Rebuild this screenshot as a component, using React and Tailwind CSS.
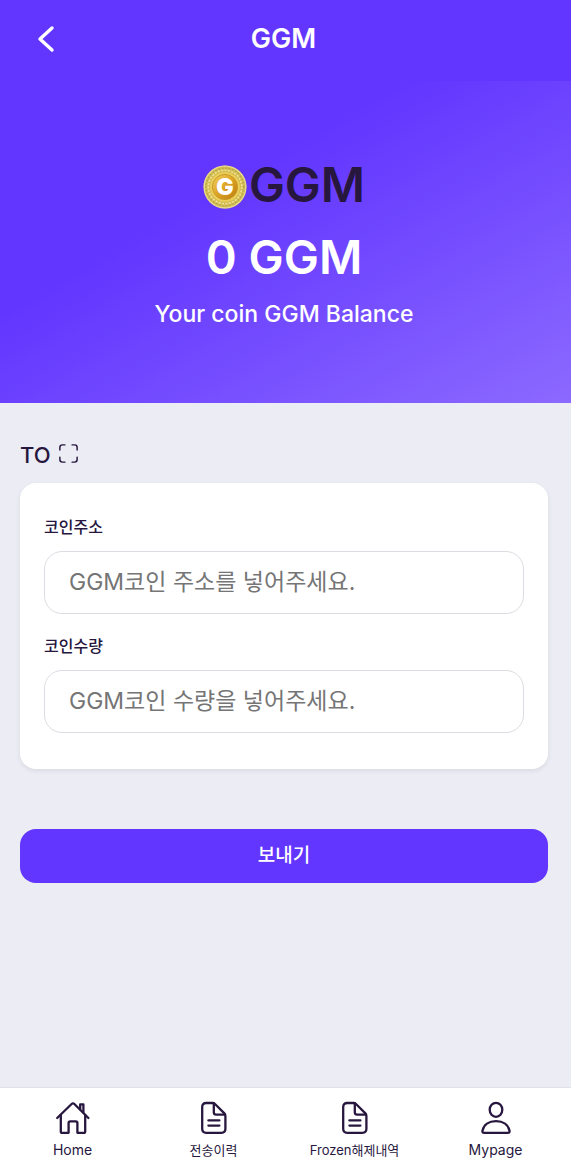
import { useState } from "react";
import { IoScanOutline } from "react-icons/io5";

function BackIcon() {
  return (
    <svg viewBox="0 0 32 32" className="size-8" fill="none" stroke="currentColor" strokeWidth="3.4" strokeLinecap="round" strokeLinejoin="round" aria-hidden="true">
      <path d="M24 5 L12 16 L24 27" />
    </svg>
  );
}

function CoinIcon({ className = "" }) {
  return (
    <svg viewBox="0 0 44 44" className={className} aria-hidden="true">
      <defs>
        <linearGradient id="coinFace" x1="0" y1="0" x2="1" y2="1">
          <stop offset="0" stopColor="#f3d262" />
          <stop offset="0.5" stopColor="#dda324" />
          <stop offset="1" stopColor="#b97a10" />
        </linearGradient>
      </defs>
      <circle cx="22" cy="22" r="21.5" fill="#d6bd50" />
      <circle cx="22" cy="22" r="20.8" fill="none" stroke="#e6d892" strokeWidth="1.2" />
      <circle cx="22" cy="22" r="18.8" fill="none" stroke="#a9a64e" strokeWidth="1.6" strokeDasharray="1.3 2.1" />
      <circle cx="22" cy="22" r="16.8" fill="none" stroke="#efe39c" strokeWidth="1.6" strokeDasharray="2 1.4" />
      <circle cx="22" cy="22" r="14.8" fill="#ecd05a" />
      <circle cx="22" cy="22" r="12.6" fill="url(#coinFace)" stroke="#c99a2a" strokeWidth="1" />
      <text
        x="22"
        y="30"
        textAnchor="middle"
        fontSize="23"
        fontWeight="900"
        fill="#ffffff"
        fontFamily="Inter, sans-serif"
      >
        G
      </text>
    </svg>
  );
}

function HomeIcon() {
  return (
    <svg viewBox="0 0 36 36" className="size-9" fill="none" stroke="currentColor" strokeWidth="2.3" strokeLinecap="round" strokeLinejoin="round" aria-hidden="true">
      <path d="M2.2 18 L16.6 4 Q18 2.7 19.4 4 L33.4 18" />
      <path d="M5.8 15 V31.4 Q5.8 32.8 7.2 32.8 H13.6 V23 Q13.6 21.4 15.2 21.4 H20.8 Q22.4 21.4 22.4 23 V32.8 H28.8 Q30.2 32.8 30.2 31.4 V15" />
      <path d="M25.2 9.4 V4.4 H28.4 V12.6" />
    </svg>
  );
}

function DocumentIcon() {
  return (
    <svg viewBox="0 0 36 36" className="size-9" fill="none" stroke="currentColor" strokeWidth="2.3" strokeLinecap="round" strokeLinejoin="round" aria-hidden="true">
      <path d="M29.4 16.2 V28.8 Q29.4 32.8 25.4 32.8 H10.2 Q6.2 32.8 6.2 28.8 V7 Q6.2 3 10.2 3 H16.6 Q18 3 19 4 L28.4 13.4 Q29.4 14.4 29.4 16.2 Z" />
      <path d="M17.8 3.6 V12.2 Q17.8 14.6 20.2 14.6 H28.8" />
      <path d="M12.4 20.4 H23.4 M12.4 25.6 H23.4" />
    </svg>
  );
}

function PersonIcon() {
  return (
    <svg viewBox="0 0 36 36" className="size-9" fill="none" stroke="currentColor" strokeWidth="2.3" strokeLinecap="round" strokeLinejoin="round" aria-hidden="true">
      <ellipse cx="18" cy="9.8" rx="6.3" ry="7" />
      <path d="M4.4 31 C5.6 24.6 11 21.2 18 21.2 S30.4 24.6 31.6 31 Q31.8 32.8 29.8 32.8 H6.2 Q4.2 32.8 4.4 31 Z" />
    </svg>
  );
}

function Field({ id, label, placeholder, value, onChange }) {
  return (
    <div>
      <label htmlFor={id} className="block text-base font-medium text-[#27173e]">
        {label}
      </label>
      <input
        id={id}
        type="text"
        value={value}
        onChange={(e) => onChange(e.target.value)}
        placeholder={placeholder}
        className="mt-3 block h-[63px] w-full rounded-[18px] border border-[#dcdce2] bg-white px-6 pb-0.5 text-[23px] text-[#27173e] placeholder:text-[#757575] focus:outline-none"
      />
    </div>
  );
}

const navItems = [
  { label: "Home", Icon: HomeIcon, textSize: "text-sm" },
  { label: "전송이력", Icon: DocumentIcon, textSize: "text-[13px]" },
  { label: "Frozen해제내역", Icon: DocumentIcon, textSize: "text-[13px]" },
  { label: "Mypage", Icon: PersonIcon, textSize: "text-sm" },
];

export default function App() {
  const [address, setAddress] = useState("");
  const [amount, setAmount] = useState("");

  return (
    <div className="flex min-h-screen flex-col bg-[#ececf5] font-['Inter','Noto_Sans_CJK_KR',sans-serif] text-[#27173e]">
      {/* Header */}
      <header className="grid h-[81px] grid-cols-[48px_1fr_48px] items-center bg-[#6236ff] pr-6 pl-5 text-white">
        <button type="button" aria-label="Back" className="flex justify-center pb-1">
          <BackIcon />
        </button>
        <h1 className="pb-1 text-center text-[27px] leading-8 font-semibold">GGM</h1>
      </header>

      {/* Balance */}
      <section className="flex h-[322px] flex-col items-center bg-[linear-gradient(150deg,#6236ff_36%,#8c69ff_100%)] pt-[74px] pr-[3px] text-center text-white">
        <div className="flex items-center gap-0.5 text-[#27173e]">
          <CoinIcon className="mt-1 size-11" />
          <h2 className="text-5xl leading-[60px] font-semibold">GGM</h2>
        </div>
        <p className="mt-3 text-[47px] leading-[60px] font-semibold">0 GGM</p>
        <p className="mt-[11px] text-[23px] leading-8 font-medium">Your coin GGM Balance</p>
      </section>

      {/* Send form */}
      <main className="flex-1 pt-9 pr-[23px] pb-8 pl-5">
        <form onSubmit={(e) => e.preventDefault()}>
          <div className="flex h-8 items-center gap-1.5 text-[22px] font-medium">
            <span>TO</span>
            <button type="button" aria-label="Scan address" className="pb-1">
              <IoScanOutline className="size-[23px]" />
            </button>
          </div>

          <div className="mt-3 flex flex-col gap-5 rounded-[16px] bg-white px-6 pt-8 pb-9 shadow-[0_2px_5px_0_rgba(0,0,0,0.08)]">
            <Field
              id="address"
              label="코인주소"
              placeholder="GGM코인 주소를 넣어주세요."
              value={address}
              onChange={setAddress}
            />
            <Field
              id="amount"
              label="코인수량"
              placeholder="GGM코인 수량을 넣어주세요."
              value={amount}
              onChange={setAmount}
            />
          </div>

          <button
            type="submit"
            className="mt-[60px] h-[54px] w-full rounded-[16px] bg-[#6236ff] text-[19px] font-medium text-white"
          >
            보내기
          </button>
        </form>
      </main>

      {/* Bottom menu */}
      <nav className="grid h-20 grid-cols-4 border-t border-[#e1e1e8] bg-white pr-[5px] pl-0.5">
        {navItems.map(({ label, Icon, textSize }) => (
          <a key={label} href="#" className="flex flex-col items-center pt-3 whitespace-nowrap">
            <Icon />
            <span className={`mt-1 leading-5 ${textSize}`}>{label}</span>
          </a>
        ))}
      </nav>
    </div>
  );
}
